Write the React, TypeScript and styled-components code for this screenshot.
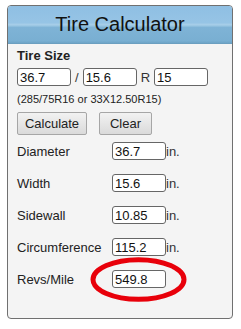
import React from "react";
import styled, { createGlobalStyle } from "styled-components";

const GlobalStyle = createGlobalStyle`
  html, body { margin: 0; padding: 0; background: #ffffff; }
  body { font-family: "Liberation Sans", Arial, sans-serif; }
  * { box-sizing: border-box; }
`;

const Panel = styled.div`
  margin: 5px 0 0 7px;
  width: 226px;
  height: 314px;
  border: 1px solid #707070;
  border-radius: 4px;
  background: #f4f4f4;
  overflow: hidden;
`;

const Header = styled.div`
  height: 38px;
  display: flex;
  align-items: center;
  justify-content: center;
  padding-bottom: 1px;
  background: linear-gradient(
    to bottom,
    #8fbfe3 0%,
    #96c4e5 45%,
    #a6cde8 50%,
    #9cc7e3 53%,
    #7fb3d6 58%,
    #79afd2 94%,
    #6ea4c7 100%
  );
  border-bottom: 1px solid #6b9fc0;
  font-size: 20px;
  color: #111;
`;

const Body = styled.div`
  padding: 4px 0 0 9px;
`;

const SectionTitle = styled.div`
  font-size: 13px;
  line-height: 15px;
  font-weight: bold;
  color: #222;
`;

const SizeRow = styled.div`
  margin-top: 5px;
  display: flex;
  align-items: center;
  gap: 4px;
  height: 18px;
`;

const Sep = styled.span<{ $gap?: number }>`
  font-size: 13px;
  color: #333;
  margin-right: ${(p) => p.$gap ?? 0}px;
`;

const Field = styled.input`
  width: 54px;
  height: 18px;
  border: 1px solid #666;
  border-radius: 3px;
  background: #fff;
  padding: 0 2px;
  font-family: "Liberation Sans", Arial, sans-serif;
  font-size: 13px;
  color: #111;
  outline: none;
`;

const Hint = styled.div`
  margin-top: 7px;
  font-size: 11px;
  line-height: 13px;
  color: #222;
`;

const Buttons = styled.div`
  margin-top: 6px;
  display: flex;
  gap: 12px;
`;

const Button = styled.button<{ $w: number }>`
  width: ${(p) => p.$w}px;
  height: 23px;
  padding: 0;
  border: 1px solid #a6a6a6;
  border-radius: 2px;
  background: linear-gradient(to bottom, #f2f2f2 0%, #e6e6e6 50%, #dadada 100%);
  font-family: "Liberation Sans", Arial, sans-serif;
  font-size: 13px;
  color: #222;
`;

const Results = styled.div`
  margin-top: 0;
`;

const Row = styled.div`
  position: relative;
  height: 32px;
  display: grid;
  grid-template-columns: 95px 54px auto;
  align-items: center;
`;

const Label = styled.span`
  font-size: 13px;
  color: #222;
`;

const Unit = styled.span`
  font-size: 13px;
  color: #333;
`;

const Circle = styled.svg`
  position: absolute;
  left: 73px;
  top: -6px;
  pointer-events: none;
`;

const rows = [
  { label: "Diameter", value: "36.7", unit: "in." },
  { label: "Width", value: "15.6", unit: "in." },
  { label: "Sidewall", value: "10.85", unit: "in." },
  { label: "Circumference", value: "115.2", unit: "in." },
  { label: "Revs/Mile", value: "549.8", unit: "", mark: true },
];

export default function App() {
  return (
    <>
      <GlobalStyle />
      <Panel>
        <Header>Tire Calculator</Header>
        <Body>
          <SectionTitle>Tire Size</SectionTitle>
          <SizeRow>
            <Field defaultValue="36.7" />
            <Sep>/</Sep>
            <Field defaultValue="15.6" />
            <Sep>R</Sep>
            <Field defaultValue="15" />
          </SizeRow>
          <Hint>(285/75R16 or 33X12.50R15)</Hint>
          <Buttons>
            <Button $w={70}>Calculate</Button>
            <Button $w={53}>Clear</Button>
          </Buttons>
          <Results>
            {rows.map((r) => (
              <Row key={r.label}>
                <Label>{r.label}</Label>
                <Field defaultValue={r.value} />
                <Unit>{r.unit}</Unit>
                {r.mark && (
                  <Circle width="97" height="45" viewBox="0 0 97 45">
                    <ellipse
                      cx="48.5"
                      cy="22.5"
                      rx="45.5"
                      ry="19.8"
                      fill="none"
                      stroke="#e8000a"
                      strokeWidth="5"
                    />
                  </Circle>
                )}
              </Row>
            ))}
          </Results>
        </Body>
      </Panel>
    </>
  );
}
